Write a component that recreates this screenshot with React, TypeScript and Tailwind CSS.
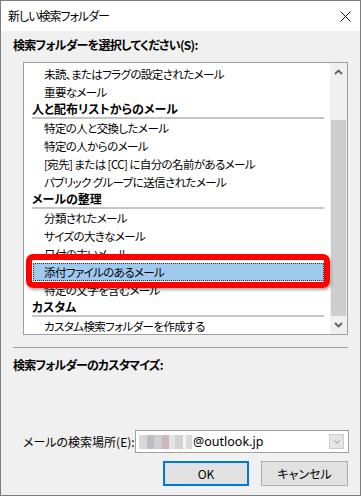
import { ChevronDown } from 'lucide-react';

type Row = { label: string; kind: 'header' | 'item' | 'selected' };

const rows: Row[] = [
  { label: '未読、またはフラグの設定されたメール', kind: 'item' },
  { label: '重要なメール', kind: 'item' },
  { label: '人と配布リストからのメール', kind: 'header' },
  { label: '特定の人と交換したメール', kind: 'item' },
  { label: '特定の人からのメール', kind: 'item' },
  { label: '[宛先] または [CC] に自分の名前があるメール', kind: 'item' },
  { label: 'パブリック グループに送信されたメール', kind: 'item' },
  { label: 'メールの整理', kind: 'header' },
  { label: '分類されたメール', kind: 'item' },
  { label: 'サイズの大きなメール', kind: 'item' },
  { label: '日付の古いメール', kind: 'item' },
  { label: '添付ファイルのあるメール', kind: 'selected' },
  { label: '特定の文字を含むメール', kind: 'item' },
  { label: 'カスタム', kind: 'header' },
  { label: 'カスタム検索フォルダーを作成する', kind: 'item' },
];

const font = "[font-family:'Noto_Sans_CJK_JP','Noto_Sans',sans-serif] [font-feature-settings:'palt']";

function ListRow({ row }: { row: Row }) {
  if (row.kind === 'header') {
    return (
      <div className="ml-[8px] h-[18px] border-b-2 border-[#c6c6c6] font-bold leading-[16px] whitespace-nowrap">
        {row.label}
      </div>
    );
  }
  if (row.kind === 'selected') {
    return (
      <div className="h-[18px] ml-[9px] border border-dotted border-[#333] bg-[#9fcaee] pl-[10px] text-[11.5px] tracking-[-0.6px] leading-[16px] whitespace-nowrap">
        {row.label}
      </div>
    );
  }
  return (
    <div className="h-[18px] pl-[20px] text-[11.5px] tracking-[-0.6px] leading-[18px] whitespace-nowrap">
      {row.label}
    </div>
  );
}

export default function App() {
  return (
    <div
      className={`w-[361px] h-[496px] border border-[#7d7d7d] bg-[#f0f0f0] flex flex-col text-[12px] text-black ${font}`}
    >
      {/* title bar */}
      <div className="h-[30px] bg-white flex items-center justify-between pl-[7px] pr-[8px]">
        <span className="leading-[16px] tracking-[-1px]">新しい検索フォルダー</span>
        <svg width="11" height="11" viewBox="0 0 11 11" className="mr-[1px]">
          <path d="M0.5 0.5 L10.5 10.5 M10.5 0.5 L0.5 10.5" stroke="#111" strokeWidth="1" />
        </svg>
      </div>

      <div className="ml-[12px] mt-[6px] font-bold leading-[16px] tracking-[-0.7px]">
        検索フォルダーを選択してください(S):
      </div>

      {/* list box */}
      <div className="relative ml-[22px] mt-[9px] w-[325px] h-[273px] border border-[#a0a0a0] bg-white flex">
        <div className="flex-1 pt-[2px] pr-[6px] overflow-hidden">
          {rows.map((row, i) => (
            <ListRow key={i} row={row} />
          ))}
        </div>
        <div className="w-[17px] bg-[#f0f0f0] flex flex-col">
          <div className="h-[17px] flex items-center justify-center">
            <svg width="9" height="6" viewBox="0 0 9 6">
              <path d="M1 5 L4.5 1.5 L8 5" fill="none" stroke="#606060" strokeWidth="1.8" />
            </svg>
          </div>
          <div className="h-[40px]" />
          <div className="h-[196px] mx-[1px] bg-[#cdcdcd]" />
          <div className="flex-1 flex items-center justify-center">
            <svg width="9" height="6" viewBox="0 0 9 6">
              <path d="M1 1 L4.5 4.5 L8 1" fill="none" stroke="#606060" strokeWidth="1.8" />
            </svg>
          </div>
        </div>
        {/* red annotation */}
        <div className="absolute left-[2px] top-[191px] w-[304px] h-[34px] rounded-[7px] border-[6px] border-[#ff0000] shadow-[1px_2px_3px_rgba(0,0,0,0.35)]" />
      </div>

      <div className="ml-[12px] mt-[12px] w-[335px] border-t border-[#a0a0a0]" />

      <div className="ml-[12px] mt-[9px] font-bold leading-[16px] tracking-[-0.8px]">検索フォルダーのカスタマイズ:</div>

      <div className="mt-[57px] flex items-center">
        <span className="ml-[22px] w-[112px] leading-[16px] whitespace-nowrap">メールの検索場所(E):</span>
        <div className="w-[214px] h-[23px] border border-[#a0a0a0] bg-white flex items-center">
          <div className="ml-[3px] flex h-[14px]">
            <div className="w-[8px] bg-[#d8d8d8]" />
            <div className="w-[7px] bg-[#bdbdbd]" />
            <div className="w-[8px] bg-[#cfcfd3]" />
            <div className="w-[7px] bg-[#c9b9bb]" />
            <div className="w-[6px] bg-[#e4e4e4]" />
            <div className="w-[8px] bg-[#d2d2d2]" />
            <div className="w-[3px] bg-[#f4f4f4]" />
            <div className="w-[6px] bg-[#d9d9d9]" />
          </div>
          <span className="ml-[1px] [font-family:'Noto_Sans',sans-serif] text-[12.5px] leading-[16px]">@outlook.jp</span>
          <div className="ml-auto mr-[4px] w-[15px] h-[15px] bg-[#e5e5e5] border border-[#cccccc] flex items-center justify-center">
            <ChevronDown className="w-[10px] h-[10px] text-[#555]" strokeWidth={1.5} />
          </div>
        </div>
      </div>

      <div className="mt-[8px] flex">
        <button className="ml-[162px] w-[86px] h-[25px] border-2 border-[#0078d7] bg-[#e1e1e1] leading-[16px]">
          OK
        </button>
        <button className="ml-[12px] w-[87px] h-[25px] border border-[#adadad] bg-[#e1e1e1] leading-[16px]">
          キャンセル
        </button>
      </div>
    </div>
  );
}
